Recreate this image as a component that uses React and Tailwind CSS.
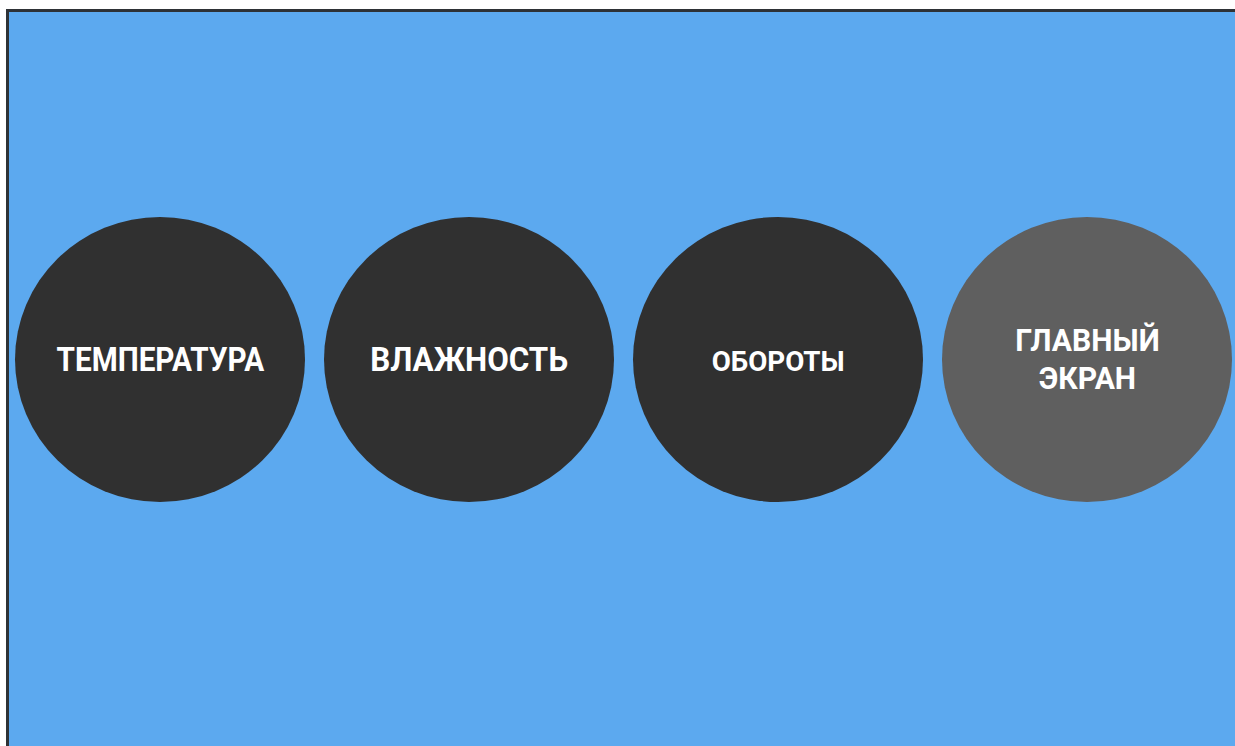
import React from 'react';

// Each label gets its own size and horizontal squeeze, the face is a condensed bold
const buttons = [
  { lines: ['ТЕМПЕРАТУРА'], text: 'text-[33px] scale-x-[0.9]', bg: 'bg-[#303030]' },
  { lines: ['ВЛАЖНОСТЬ'], text: 'text-[33px] scale-x-[0.95]', bg: 'bg-[#303030]' },
  { lines: ['ОБОРОТЫ'], text: 'text-[28px] scale-x-[0.99] translate-y-[2px]', bg: 'bg-[#303030]' },
  { lines: ['ГЛАВНЫЙ', 'ЭКРАН'], text: 'text-[31px] scale-x-[0.97]', bg: 'bg-[#5f5f5f]' },
];

export default function App() {
  return (
    <div className="w-[1235px] h-[746px] overflow-hidden bg-white pl-[6px] pt-[9px]">
      <div className="h-[760px] bg-[#5ca9ef] border-l-[3px] border-t-[3px] border-[#2e3236]">
        <div className="flex gap-[19px] pl-[6px] pt-[205px]">
          {buttons.map((b) => (
            <button
              key={b.lines[0]}
              className={`w-[290px] h-[285px] shrink-0 rounded-[50%] ${b.bg} flex items-center justify-center`}
            >
              <span
                className={`flex flex-col items-center text-white font-bold leading-[38px] ${b.text}`}
                style={{ fontFamily: 'Roboto, "Liberation Sans", sans-serif' }}
              >
                {b.lines.map((l) => (
                  <span key={l}>{l}</span>
                ))}
              </span>
            </button>
          ))}
        </div>
      </div>
    </div>
  );
}
